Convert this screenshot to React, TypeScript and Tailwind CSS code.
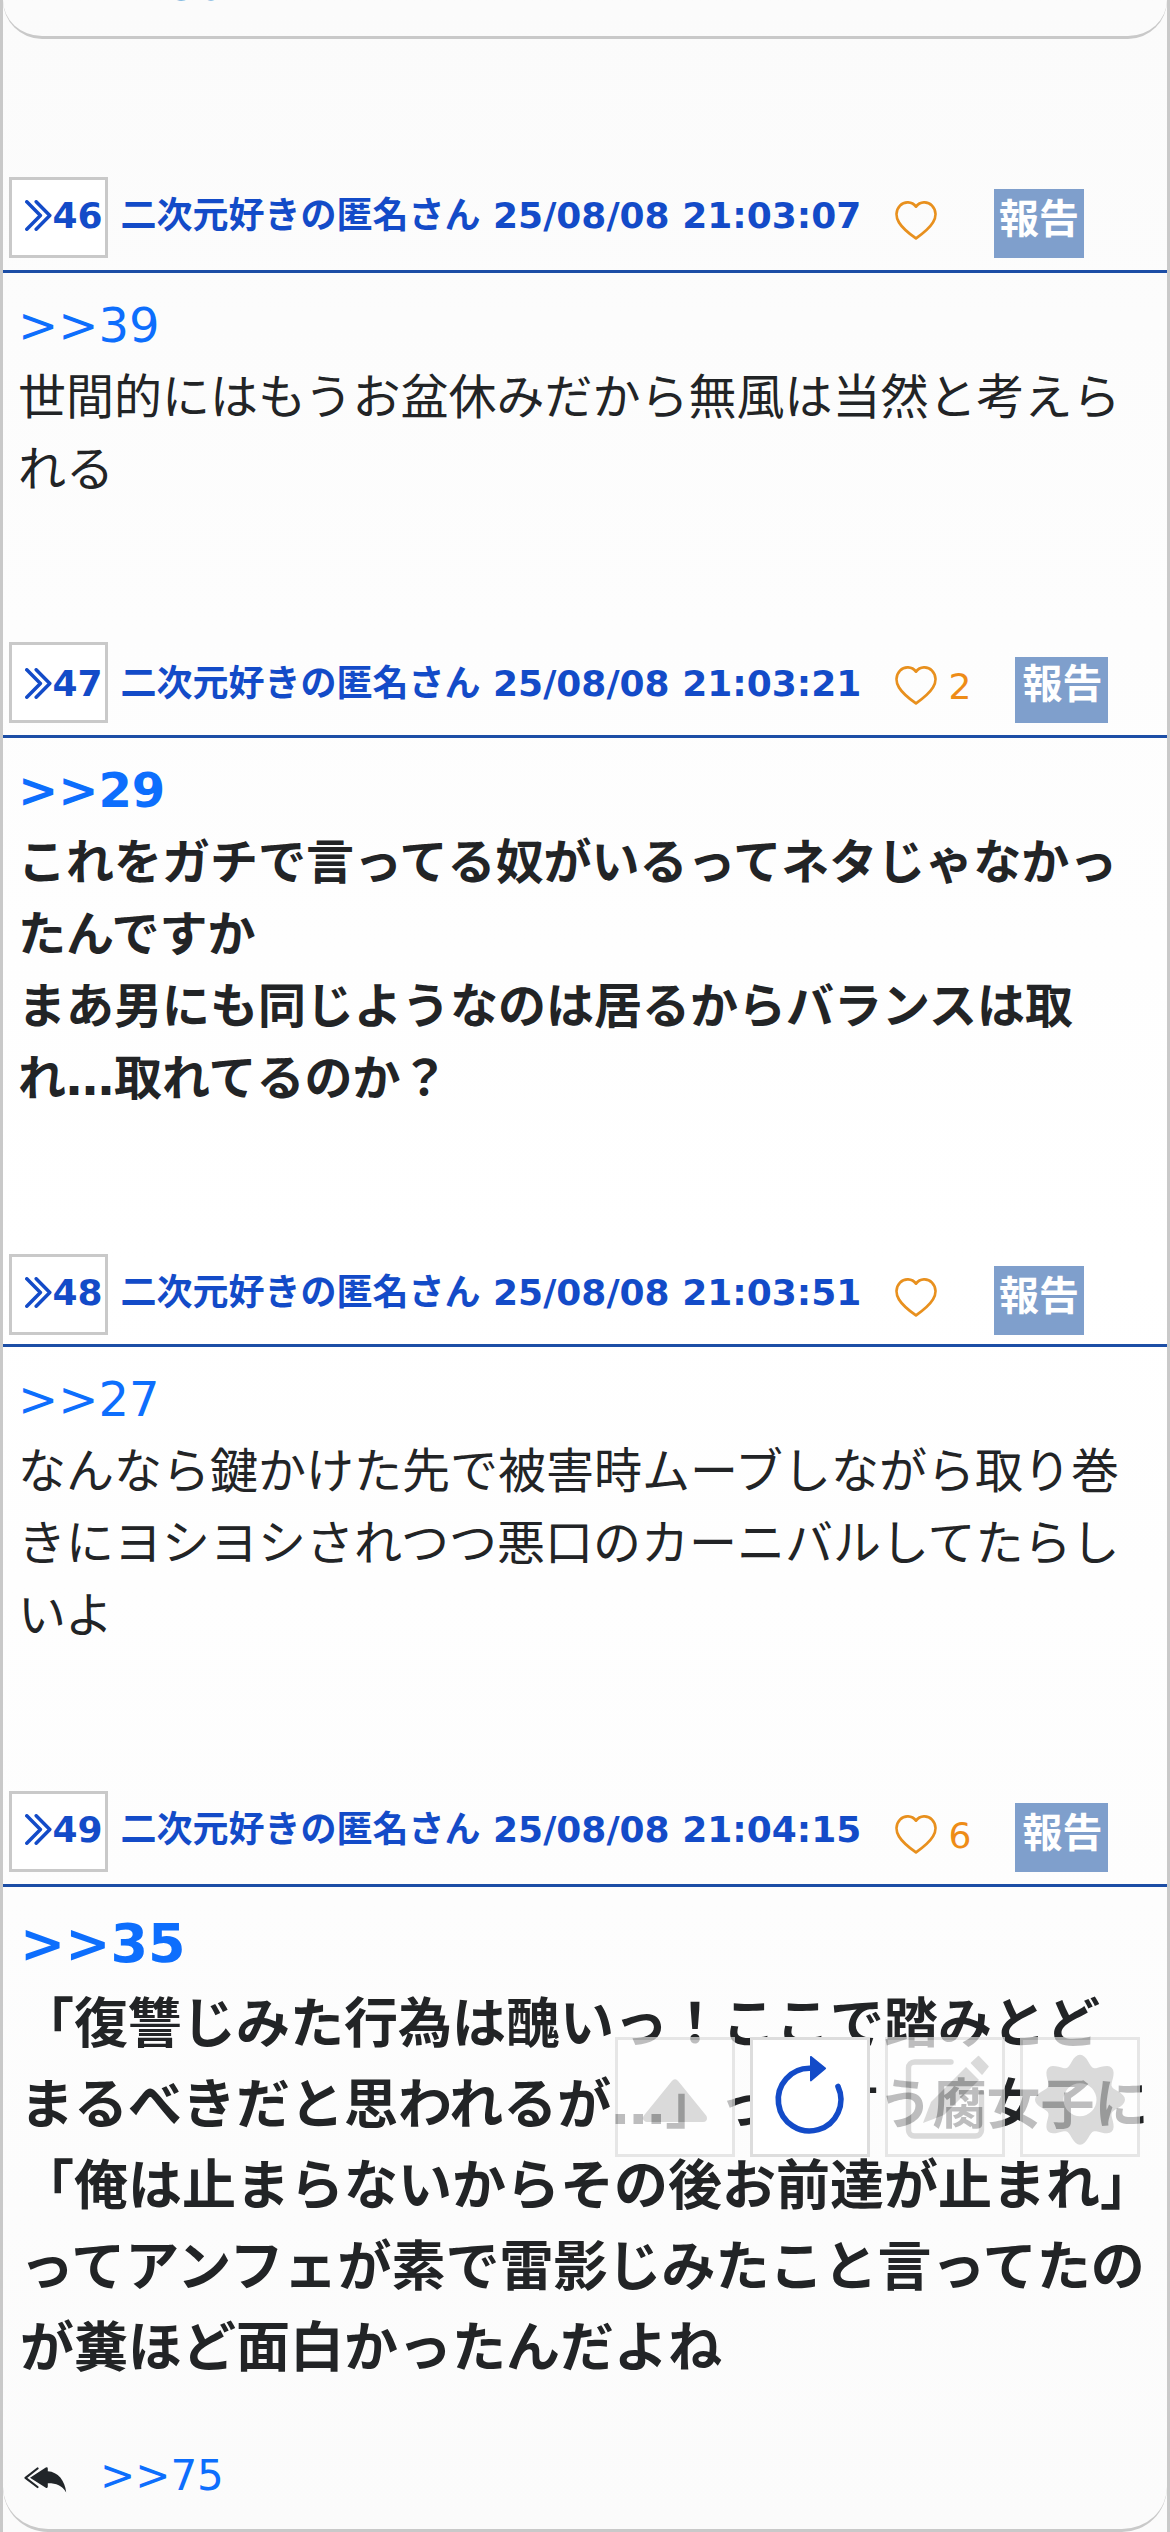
import { clsx } from 'clsx';

// ================================================================
// 型
// ================================================================
interface Post {
  num:    number;
  time:   string;
  likes?: number;
  anchor: string;
  lines:  string[];
  header: string; // ヘッダー下の余白
  title:  string; // 番号・名前の下余白
  report: string;
  body:   string;
}

// ================================================================
// データ
// ================================================================
const AUTHOR = '二次元好きの匿名さん';

const POSTS: Post[] = [
  {
    num: 46, time: '25/08/08 21:03:07', anchor: '>>39',
    lines: ['世間的にはもうお盆休みだから無風は当然と考えら', 'れる'],
    header: 'pb-3', title: 'mb-6', report: 'h-[69px] w-[90px] pb-[9px] pl-px',
    body: 'pb-[137px] pl-[15px] text-[48px] leading-[72px]',
  },
  {
    num: 47, time: '25/08/08 21:03:21', likes: 2, anchor: '>>29',
    lines: [
      'これをガチで言ってる奴がいるってネタじゃなかっ',
      'たんですか',
      'まあ男にも同じようなのは居るからバランスは取',
      'れ…取れてるのか？',
    ],
    header: 'pb-3', title: 'mb-[21px]', report: 'h-[66px] w-[93px] pb-3 pl-[3px]',
    body: 'pb-[140px] pl-[15px] text-[48px] font-bold leading-[72px]',
  },
  {
    num: 48, time: '25/08/08 21:03:51', anchor: '>>27',
    lines: [
      'なんなら鍵かけた先で被害時ムーブしながら取り巻',
      'きにヨシヨシされつつ悪口のカーニバルしてたらし',
      'いよ',
    ],
    header: 'pb-[9px]', title: 'mb-6', report: 'h-[69px] w-[90px] pb-[9px] pl-px',
    body: 'pb-[140px] pl-[15px] text-[48px] leading-[72px]',
  },
  {
    num: 49, time: '25/08/08 21:04:15', likes: 6, anchor: '>>35',
    lines: [
      '「復讐じみた行為は醜いっ！ここで踏みとど',
      'まるべきだと思われるが…」って言う腐女子に',
      '「俺は止まらないからその後お前達が止まれ」',
      'ってアンフェが素で雷影じみたこと言ってたの',
      'が糞ほど面白かったんだよね',
    ],
    header: 'pb-3', title: 'mb-6', report: 'h-[69px] w-[93px] pb-[9px] pl-[3px]',
    body: 'pl-[17px] text-[54px] font-bold leading-[81px]',
  },
];

// ================================================================
// アイコン
// ================================================================
function DoubleChevron() {
  return (
    <svg width="27" height="31" viewBox="0 0 27 31" fill="none" stroke="currentColor" strokeWidth="3.5" strokeLinecap="round" strokeLinejoin="round">
      <path d="M1.8 1.8 15.4 15.5 1.8 29.2" />
      <path d="M11.200 1.800 24.800 15.500 11.200 29.200" />
    </svg>
  );
}

function Heart() {
  return (
    <svg width="42" height="39" viewBox="0 0 42 39" fill="none" stroke="#e8901e" strokeWidth="2.8" strokeLinejoin="round">
      <path d="M21 5.6C17 .4 9.4 0 5 4.6.7 9.2.6 15.8 4 21.4 7.6 27.4 14 32.4 21 37.4 28 32.4 34.4 27.4 38 21.4 41.4 15.8 41.3 9.2 37 4.6 32.6 0 25 .4 21 5.6Z" />
    </svg>
  );
}

function ReplyAll() {
  return (
    <svg width="43" height="26" viewBox="0 0 43 26" fill="#212529">
      <path d="M13.5 1.5 1.5 10.8 13.5 20" fill="none" stroke="#212529" strokeWidth="2.2" strokeLinecap="round" strokeLinejoin="round" />
      <path d="M6 10.8 21.8.6Q23.8-.2 23.8 1.8V4.3C34 5 41 13.5 42.2 25.4 38 18.6 32 16.2 23.8 16.3V19.6Q23.8 21.6 21.8 20.8Z" />
    </svg>
  );
}

// 歯車の輪郭（8枚歯）
const GEAR_PATH = Array.from({ length: 120 }, (_, i) => {
  const t = (i / 120) * Math.PI * 2;
  const r = 39.7 + 5.3 * Math.cos(8 * t);
  return `${i === 0 ? 'M' : 'L'}${(57 + r * Math.sin(t)).toFixed(2)} ${(59.7 - r * Math.cos(t)).toFixed(2)}`;
}).join('') + 'Z';

// ================================================================
// 部品
// ================================================================
function PostItem({ post }: { post: Post }) {
  return (
    <article>
      <header className={clsx('flex items-end border-b-[3px] border-[#1c4ea6] pl-1.5 font-bold text-[#134bc8]', post.header)}>
        <div className="flex h-[81px] w-[99px] shrink-0 items-end border-[3px] border-[#c9c9c9] bg-white pl-[12.5px]">
          <span className={clsx('flex items-end gap-px text-[36px] leading-[36px]', post.title)}>
            <DoubleChevron />
            <span className="-mb-[3px]">{post.num}</span>
          </span>
        </div>
        <div className={clsx('ml-[12.5px] w-[774px] shrink-0 whitespace-nowrap text-[36px] leading-[36px]', post.title)}>
          {AUTHOR} {post.time}
        </div>
        <div className="mb-[18px] shrink-0"><Heart /></div>
        <div className={clsx('mb-[18px] h-9 shrink-0 pl-3 text-[36px] font-normal leading-[36px] text-[#ee8c17]', post.likes ? 'w-[78px]' : 'w-[57px]')}>
          {post.likes}
        </div>
        <button className={clsx('flex shrink-0 items-center justify-center whitespace-nowrap bg-[#7f9fcc] text-[40px] leading-[60px] text-white', post.report)}>
          報告
        </button>
      </header>

      <div className={clsx('whitespace-nowrap pt-4 text-[#222426]', post.body)}>
        <a className="block text-[#0d6efd]">{post.anchor}</a>
        {post.lines.map((line) => <p key={line}>{line}</p>)}
      </div>
    </article>
  );
}

function FloatingMenu() {
  const box = 'flex size-[120px] border-[3px] border-[#ddd] bg-white';
  return (
    <nav className="absolute left-[612px] top-[2037px] flex gap-[15px]">
      <button className={clsx(box, 'opacity-70')}>
        <svg width="114" height="114" viewBox="0 0 114 114" fill="#ccc" stroke="#ccc" strokeWidth="8" strokeLinejoin="round">
          <path d="M57 43.5 29 78H85Z" />
        </svg>
      </button>
      <button className={box}>
        <svg width="114" height="114" viewBox="0 0 114 114" fill="none" stroke="#134bc8" strokeWidth="5.6" strokeLinecap="round">
          <path d="M57 28.3A31.3 31.3 0 1 0 85 46.5" />
          <path d="M57.8 16.7 72.3 28.3 57.8 40.6Z" fill="#134bc8" strokeWidth="1.6" strokeLinejoin="round" />
        </svg>
      </button>
      <button className={clsx(box, 'opacity-70')}>
        <svg width="114" height="114" viewBox="0 0 114 114" fill="none" stroke="#ccc" strokeWidth="5.4" strokeLinecap="round" strokeLinejoin="round">
          <path d="M63 22H26.5A6 6 0 0 0 20.5 28V90A6 6 0 0 0 26.5 96H87.5A6 6 0 0 0 93.5 90V53" />
          <path d="M35 83 43 62 78 27 91 40 56 75Z" fill="#ccc" stroke="none" />
          <path d="M83.5 23 90.5 16.5 100 26.5 94 34Z" fill="#ccc" strokeWidth="1.5" />
        </svg>
      </button>
      <button className={clsx(box, 'opacity-70')}>
        <svg width="114" height="114" viewBox="0 0 114 114" fill="#ccc" fillRule="evenodd">
          <path d={`${GEAR_PATH}M40.5 59.7a16.5 16.5 0 1 0 33 0a16.5 16.5 0 1 0-33 0Z`} />
        </svg>
      </button>
    </nav>
  );
}

// ================================================================
// メインコンポーネント
// ================================================================
export default function App() {
  return (
    <div className="relative h-[2532px] w-[1170px] overflow-hidden border-x-[3px] border-[#c9c9c9] bg-linear-to-b from-[#fbfbfb] via-white to-[#fbfbfb] font-['DejaVu_Sans','Noto_Sans_CJK_JP',sans-serif]">
      {/* 前の書き込みの下端 */}
      <div className="mb-[138px] flex h-[39px] items-start overflow-hidden rounded-b-[45px] border-b-[3px] border-[#c9c9c9] pl-[97px]">
        <a className="-mt-[35px] text-[42px] leading-[42px] text-[#2f8fd0]">&gt;&gt;56</a>
      </div>

      {POSTS.map((p) => <PostItem key={p.num} post={p} />)}

      {/* 返信一覧 */}
      <div className="flex h-[143px] items-end rounded-b-[45px] border-b-[3px] border-[#c9c9c9] pb-8 pl-[21px]">
        <span className="mb-1"><ReplyAll /></span>
        <a className="ml-[33px] text-[42px] leading-[42px] text-[#0d6efd]">&gt;&gt;75</a>
      </div>

      <FloatingMenu />
    </div>
  );
}
